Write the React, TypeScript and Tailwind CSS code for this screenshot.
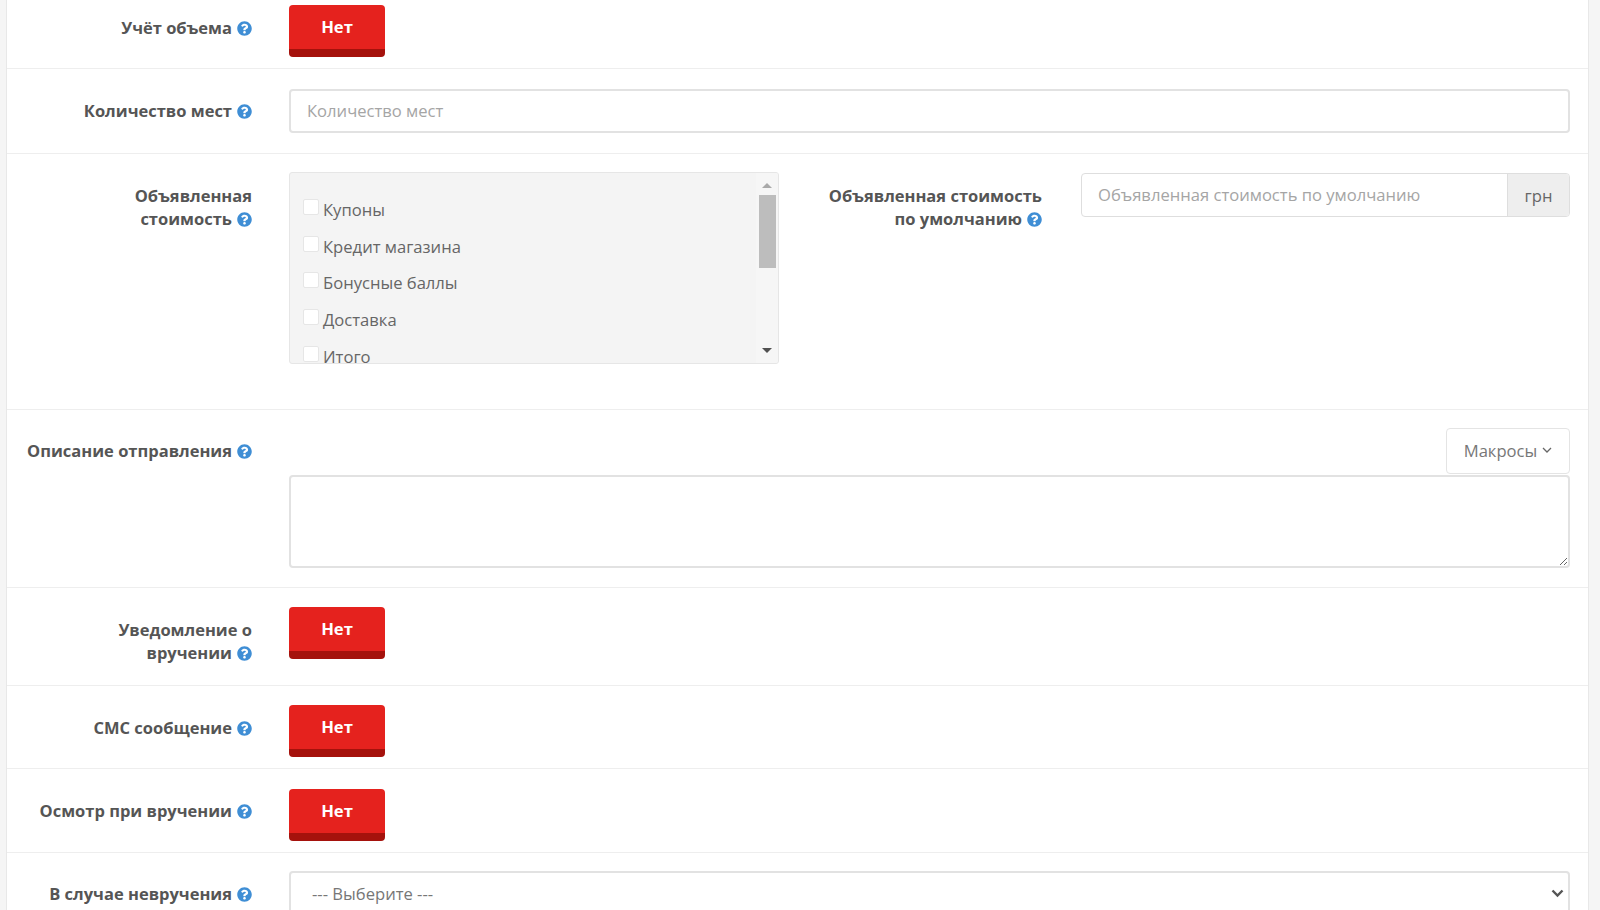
import React from "react";
import { FaQuestionCircle } from "react-icons/fa";

const sums = ["Купоны", "Кредит магазина", "Бонусные баллы", "Доставка", "Итого"];

function Label({ text }: { text: string }) {
  // the help icon stays glued to the last word when the label wraps
  const cut = text.lastIndexOf(" ");
  return (
    <span className="font-bold text-[16.5px] text-[#555]">
      {text.slice(0, cut + 1)}
      <span className="whitespace-nowrap">
        {text.slice(cut + 1)}
        <FaQuestionCircle className="inline-block w-[15px] h-[15px] ml-[5px] align-[-2px] text-[#3f8ed5]" />
      </span>
    </span>
  );
}

function NoButton() {
  return (
    <div className="w-[96px] h-[52px] rounded-[4px] bg-[#e5221e] border-b-[8px] border-[#a5120c] flex items-center justify-center text-white font-bold pb-[1px]">
      Нет
    </div>
  );
}

function Row({
  label,
  pt = "pt-[20px]",
  labelPt = "pt-[11px]",
  pb,
  children,
}: {
  label: string;
  pt?: string;
  labelPt?: string;
  pb: string;
  children: React.ReactNode;
}) {
  return (
    <div className={`flex border-b border-[#eeeeee] ${pt} ${pb}`}>
      <div className={`w-[245px] pl-[17px] text-right shrink-0 ${labelPt}`}>
        <Label text={label} />
      </div>
      <div className="flex-1 min-w-0 ml-[37px] mr-[18px]">{children}</div>
    </div>
  );
}

export default function App() {
  return (
    <div className="h-screen overflow-hidden bg-[#f5f5f5] font-['Open_Sans',sans-serif] text-[16.6px] leading-[23px]">
      <div className="ml-[6px] mr-[11px] -mt-[15px] bg-white border-x border-[#e8e8e8]">
        <Row label="Учёт объема" pb="pb-[11px]">
          <NoButton />
        </Row>

        <Row label="Количество мест" labelPt="pt-[10px]" pb="pb-[20px]">
          <input
            placeholder="Количество мест"
            className="w-full h-[44px] px-[16px] pb-[2px] border-2 border-[#e2e2e2] rounded-[4px] outline-none placeholder:text-[#a5a5a5]"
          />
        </Row>

        <Row label="Объявленная стоимость" pt="pt-[18px]" labelPt="pt-[12px]" pb="pb-[45px]">
          <div className="flex items-start">
            <div className="w-[490px] h-[192px] shrink-0 flex overflow-hidden bg-[#f4f4f4] border border-[#e6e6e6] rounded-[3px]">
              <div className="flex-1 pl-[13px] pt-[26px] flex flex-col gap-[12.7px] text-[#666]">
                {sums.map((s) => (
                  <label key={s} className="flex items-start h-[24px] leading-[24px] shrink-0">
                    <span className="w-[16px] h-[16px] mr-[4px] bg-white border border-[#e6e6e6] rounded-[2px] shrink-0" />
                    <span className="-mt-[1px]">{s}</span>
                  </label>
                ))}
              </div>
              <div className="w-[22px] bg-[#f6f6f6] flex flex-col items-center shrink-0">
                <span className="mt-[10px] w-0 h-0 border-x-[5px] border-x-transparent border-b-[5px] border-b-[#a9a9a9]" />
                <span className="mt-[7px] w-[17px] h-[73px] bg-[#bdbdbd] shrink-0" />
                <span className="mt-[80px] w-0 h-0 border-x-[5px] border-x-transparent border-t-[5px] border-t-[#505050]" />
              </div>
            </div>
            <div className="w-[263px] pl-[45px] pt-[12px] text-right shrink-0">
              <Label text="Объявленная стоимость по умолчанию" />
            </div>
            <div className="flex-1 ml-[39px] mt-[1px] flex h-[44px] border border-[#dedede] rounded-[4px] overflow-hidden">
              <input
                placeholder="Объявленная стоимость по умолчанию"
                className="flex-1 min-w-0 px-[16px] pb-[2px] outline-none placeholder:text-[#a5a5a5]"
              />
              <div className="w-[62px] bg-[#eeeeee] border-l border-[#dedede] flex items-center justify-center text-[#666]">
                грн
              </div>
            </div>
          </div>
        </Row>

        <Row label="Описание отправления" pt="pt-[18px]" labelPt="pt-[11px]" pb="pb-[19px]">
          <div className="flex flex-col items-end">
            <div className="w-[124px] h-[46px] mb-[1px] pb-[2px] border border-[#e4e4e4] rounded-[4px] flex items-center justify-center gap-[5px] text-[#777]">
              Макросы
              <svg width="10" height="6" viewBox="0 0 10 6" fill="none" stroke="#666" strokeWidth="1.3">
                <path d="M1 1l4 4 4-4" />
              </svg>
            </div>
            <textarea className="block w-full h-[93px] border-2 border-[#e2e2e2] rounded-[4px] outline-none" />
          </div>
        </Row>

        <Row label="Уведомление о вручении" pt="pt-[19px]" pb="pb-[21px]">
          <NoButton />
        </Row>
        <Row label="СМС сообщение" pt="pt-[19px]" pb="pb-[11px]">
          <NoButton />
        </Row>
        <Row label="Осмотр при вручении" labelPt="pt-[10px]" pb="pb-[11px]">
          <NoButton />
        </Row>

        <Row label="В случае невручения" pt="pt-[18px]" labelPt="pt-[11px]" pb="pb-[20px]">
          <div className="relative h-[44px] border-2 border-[#e2e2e2] rounded-[4px] flex items-center pl-[21px] text-[#777]">
            --- Выберите ---
            <svg className="absolute right-[4px] top-[16px]" width="13" height="9" viewBox="0 0 13 9" fill="none" stroke="#555" strokeWidth="2.4">
              <path d="M1.5 1.5l5 5 5-5" />
            </svg>
          </div>
        </Row>
      </div>
    </div>
  );
}
